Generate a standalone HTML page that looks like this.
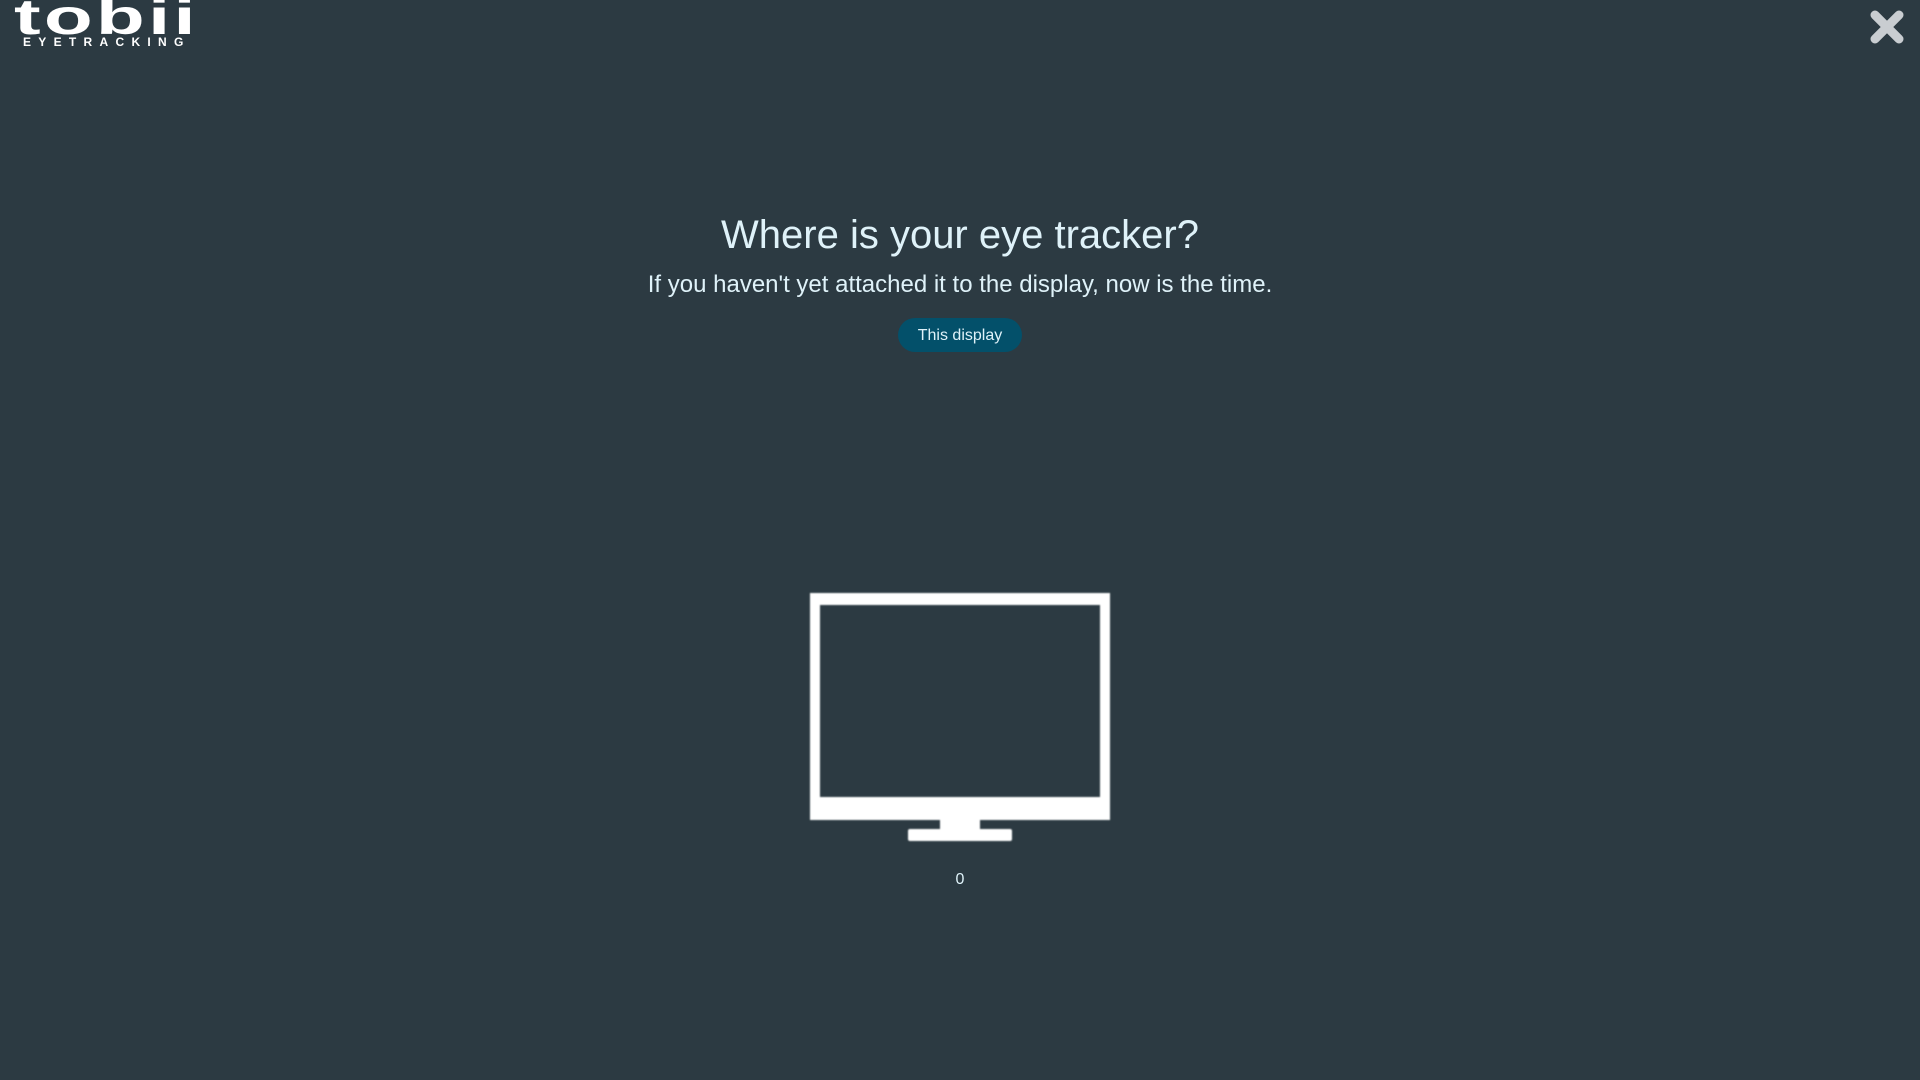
<!DOCTYPE html>
<html><head><meta charset="utf-8"><style>
html,body{margin:0;padding:0;width:1920px;height:1080px;background:#2c3a42;overflow:hidden;font-family:"Liberation Sans",Arial,sans-serif;color:#dff2f9}
.logo{position:absolute;left:14px;top:-8px;font-weight:bold;font-size:50px;color:#fff;letter-spacing:2px;line-height:1;transform:scaleX(1.6);transform-origin:0 0}
.sub{position:absolute;left:23px;top:35px;font-size:12px;color:#fff;letter-spacing:7.3px;font-weight:bold}
h1{position:absolute;top:213px;left:0;width:1920px;text-align:center;margin:0;font-weight:normal;font-size:40px}
.p{position:absolute;top:271px;left:0;width:1920px;text-align:center;font-size:24px}
.btn{position:absolute;left:898px;top:318px;width:124px;height:34px;border-radius:17px;background:#03506a;text-align:center;line-height:35px;font-size:16px}
.zero{position:absolute;top:871px;left:0;width:1920px;text-align:center;font-size:16px}
</style></head><body>
<div class="logo">tobii</div>
<div class="sub">EYETRACKING</div>
<svg style="position:absolute;left:1866px;top:6px" width="42" height="40" viewBox="0 0 42 40"><path d="M9 9 L33 33 M33 9 L9 33" stroke="#c9cdd1" stroke-width="9" stroke-linecap="round"/></svg>
<h1>Where is your eye tracker?</h1>
<div class="p">If you haven't yet attached it to the display, now is the time.</div>
<div class="btn">This display</div>
<svg style="position:absolute;left:0;top:0" width="1920" height="1080">
<defs><filter id="b"><feGaussianBlur stdDeviation="0.8"/></filter></defs>
<g filter="url(#b)">
<path fill="#fff" fill-rule="evenodd" d="M810 593H1110V820H810Z M820 605V797H1100V605Z"/>
<rect x="940" y="818" width="40" height="14" fill="#fff"/>
<rect x="908" y="829" width="104" height="12" rx="2" fill="#fff"/>
</g>
</svg>
<div class="zero">0</div>
</body></html>
